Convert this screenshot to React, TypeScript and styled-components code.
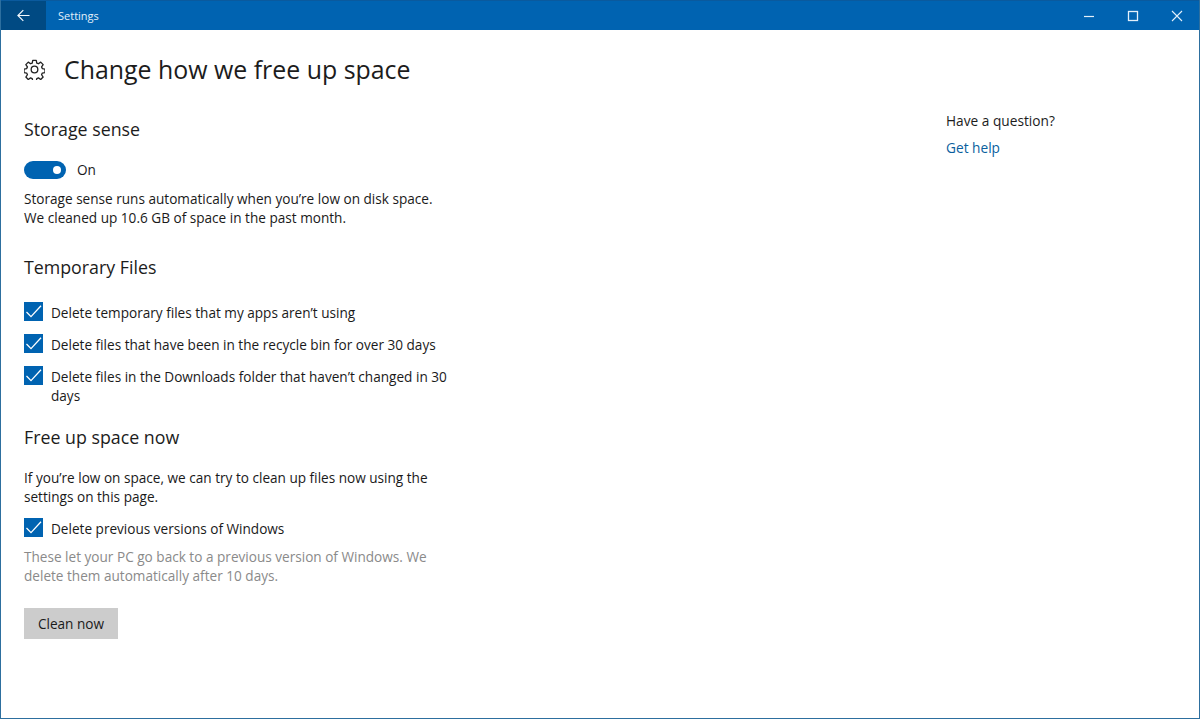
import React from "react";
import styled, { createGlobalStyle } from "styled-components";

const Global = createGlobalStyle`
  html, body { margin: 0; padding: 0; background: #fff; }
  body { font-family: "Open Sans", "Noto Sans", sans-serif; color: #1a1a1a; }
`;

const Win = styled.div`
  width: 1200px; height: 719px; box-sizing: border-box; overflow: hidden;
  border: 1px solid #2d6f9f; border-top: 0; display: flex; flex-direction: column; background: #fff;
`;
const TitleBar = styled.header`
  height: 30px; flex: none; background: #0063b1; display: flex; align-items: center; margin: 0 -1px; border-top: 1px solid #0a5a9e; box-sizing: border-box; padding-right: 1px;
`;
const BackBtn = styled.div`
  width: 46px; height: 100%; background: #004a83; display: flex; align-items: center; justify-content: center;
`;
const AppName = styled.span`
  font-size: 11px; color: #e3f0fa; margin-left: 12px; flex: 1;
`;
const Caption = styled.div`
  width: 44px; height: 100%; display: flex; align-items: center; justify-content: center;
`;
const Body = styled.div`
  flex: 1; display: flex; padding-left: 23px;
`;
const Main = styled.main`
  width: 922px; flex: none;
`;
const Header = styled.div`
  display: flex; align-items: center; height: 38px; margin-top: 20px; gap: 19px;
`;
const PageTitle = styled.h1`
  margin: -1px 0 0; font-size: 24.9px; font-weight: 400; letter-spacing: 0; color: #1c1c1c; line-height: 38px;
`;
const Section = styled.h2<{ $top: number }>`
  margin: ${p => p.$top}px 0 0; font-size: 17.8px; font-weight: 400; line-height: 26px; color: #1c1c1c;
`;
const ToggleRow = styled.div`
  display: flex; align-items: center; gap: 11px; margin-top: 19px; height: 18px;
`;
const Toggle = styled.div`
  width: 42px; height: 18px; border-radius: 9px; background: #0063b1; position: relative;
  &::after { content: ""; position: absolute; right: 5px; top: 5px; width: 8px; height: 8px; border-radius: 50%; background: #fff; }
`;
const Label = styled.span`
  font-size: 13.6px; line-height: 19px; margin-top: -1px;
`;
const Para = styled.p<{ $top: number; $muted?: boolean }>`
  margin: ${p => p.$top}px 0 0; width: 430px; font-size: 13.6px; line-height: 19px; white-space: pre-line;
  color: ${p => (p.$muted ? "#8a8a8a" : "#1a1a1a")};
`;
const CheckRow = styled.div<{ $top: number }>`
  display: flex; align-items: flex-start; gap: 8px; margin-top: ${p => p.$top}px;
`;
const Box = styled.div`
  width: 19px; height: 19px; flex: none; background: #0063b1; display: flex; align-items: center; justify-content: center;
`;
const CheckText = styled.span`
  width: 410px; font-size: 13.6px; line-height: 19px; white-space: pre-line; padding-top: 1px;
`;
const CleanBtn = styled.button`
  display: block; margin-top: 23px; width: 94px; height: 31px; border: 0; padding: 0; background: #cccccc; color: #1a1a1a;
  font: 400 13.6px "Open Sans", "Noto Sans", sans-serif;
`;
const Aside = styled.aside`
  padding-top: 81px;
`;
const Question = styled.div`
  font-size: 13.7px; line-height: 19px; color: #1c1c1c;
`;
const Help = styled.a`
  display: block; margin-top: 8px; font-size: 13.7px; line-height: 19px; color: #0a5f9e;
`;

const Check = () => (
  <Box>
    <svg width="19" height="19" viewBox="0 0 19 19" fill="none" stroke="#fff" strokeWidth="1.3">
      <path d="M2.500 10 L7 14.600 L17 3.800" />
    </svg>
  </Box>
);

const Gear = () => (
  <svg width="21" height="21" viewBox="0 0 24 24" fill="none" stroke="#222" strokeWidth="1.5" strokeLinejoin="round">
    <path d="M10 1.5h4l.6 3.1 1.900.8 2.600-1.800 2.800 2.800-1.800 2.600.8 1.900 3.100.6v4l-3.100.6-.8 1.900 1.800 2.600-2.800 2.800-2.600-1.800-1.900.8-.6 3.100h-4l-.6-3.100-1.900-.8-2.600 1.800-2.800-2.800 1.800-2.600-.8-1.900-3.100-.6v-4l3.100-.6.8-1.900-1.800-2.600 2.800-2.800 2.600 1.800 1.900-.8z" />
    <circle cx="12" cy="12" r="3.800" />
  </svg>
);

export default function App() {
  return (
    <Win>
      <Global />
      <TitleBar>
        <BackBtn>
          <svg width="13" height="13" viewBox="0 0 14 14" fill="none" stroke="#f2f8fd" strokeWidth="1.3">
            <path d="M1 7h12.500M6.800 1.200 1 7l5.800 5.800" />
          </svg>
        </BackBtn>
        <AppName>Settings</AppName>
        <Caption>
          <svg width="12" height="12" viewBox="0 0 12 12" stroke="#e3f0fa" strokeWidth="1.2"><path d="M1 6.500h10" /></svg>
        </Caption>
        <Caption>
          <svg width="12" height="12" viewBox="0 0 12 12" fill="none" stroke="#e3f0fa" strokeWidth="1.3"><rect x="1.500" y="1.500" width="9" height="9" /></svg>
        </Caption>
        <Caption>
          <svg width="12" height="12" viewBox="0 0 12 12" stroke="#e3f0fa" strokeWidth="1.1"><path d="M1 1l10 10M11 1 1 11" /></svg>
        </Caption>
      </TitleBar>
      <Body>
        <Main>
          <Header>
            <Gear />
            <PageTitle>Change how we free up space</PageTitle>
          </Header>
          <Section $top={28}>Storage sense</Section>
          <ToggleRow>
            <Toggle />
            <Label>On</Label>
          </ToggleRow>
          <Para $top={10}>{"Storage sense runs automatically when you’re low on disk space.\nWe cleaned up 10.6 GB of space in the past month."}</Para>
          <Section $top={27}>Temporary Files</Section>
          <CheckRow $top={22}><Check /><CheckText>Delete temporary files that my apps aren’t using</CheckText></CheckRow>
          <CheckRow $top={12}><Check /><CheckText>Delete files that have been in the recycle bin for over 30 days</CheckText></CheckRow>
          <CheckRow $top={12}><Check /><CheckText>{"Delete files in the Downloads folder that haven’t changed in 30\ndays"}</CheckText></CheckRow>
          <Section $top={19}>Free up space now</Section>
          <Para $top={18}>{"If you’re low on space, we can try to clean up files now using the\nsettings on this page."}</Para>
          <CheckRow $top={12}><Check /><CheckText>Delete previous versions of Windows</CheckText></CheckRow>
          <Para $top={9} $muted>{"These let your PC go back to a previous version of Windows. We\ndelete them automatically after 10 days."}</Para>
          <CleanBtn>Clean now</CleanBtn>
        </Main>
        <Aside>
          <Question>Have a question?</Question>
          <Help>Get help</Help>
        </Aside>
      </Body>
    </Win>
  );
}
